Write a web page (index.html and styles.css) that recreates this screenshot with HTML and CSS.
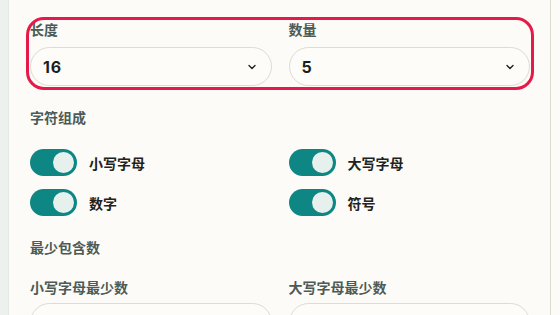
FILE: index.html
```html
<!DOCTYPE html>
<html lang="zh">
<head>
	<meta charset="utf-8">
	<title>密码生成器</title>
	<link rel="stylesheet" href="styles.css">
</head>
<body>
	<div class="page">
		<div class="rail"></div>
		<div class="panel">
			<div class="grid highlight">
				<div class="field">
					<label class="label">长度</label>
					<div class="select">
						<span>16</span>
						<svg class="chev" width="10" height="10" viewBox="0 0 10 10"><path d="M2 3.5 L5 6.5 L8 3.5" fill="none" stroke="#222" stroke-width="1.4" stroke-linecap="round" stroke-linejoin="round"/></svg>
					</div>
				</div>
				<div class="field">
					<label class="label">数量</label>
					<div class="select">
						<span>5</span>
						<svg class="chev" width="10" height="10" viewBox="0 0 10 10"><path d="M2 3.5 L5 6.5 L8 3.5" fill="none" stroke="#222" stroke-width="1.4" stroke-linecap="round" stroke-linejoin="round"/></svg>
					</div>
				</div>
			</div>

			<h3 class="label section">字符组成</h3>
			<div class="grid toggles">
				<div class="opt"><span class="switch on"></span>小写字母</div>
				<div class="opt"><span class="switch on"></span>大写字母</div>
				<div class="opt"><span class="switch on"></span>数字</div>
				<div class="opt"><span class="switch on"></span>符号</div>
			</div>

			<h3 class="label section">最少包含数</h3>
			<div class="grid mins">
				<div class="field">
					<label class="label">小写字母最少数</label>
					<div class="select"></div>
				</div>
				<div class="field">
					<label class="label">大写字母最少数</label>
					<div class="select"></div>
				</div>
			</div>
		</div>
		<div class="gutter"></div>
	</div>
</body>
</html>
```

FILE: styles.css
```css
* {
  box-sizing: border-box;
  margin: 0;
  padding: 0;
}

body {
  font-family: Inter, "Noto Sans CJK SC", sans-serif;
  background: #fcfbf7;
  overflow: hidden;
}

.page {
  display: flex;
  height: 315px;
}

.rail {
  width: 9px;
  background: #edf1ee;
  border-right: 1px solid #e4e8e4;
}

.panel {
  flex: 1;
  padding: 21px 20px 0 21px;
  border-right: 1px solid #dcd9ce;
  background: #fcfbf7;
}

.gutter {
  width: 9px;
}

.grid {
  display: grid;
  grid-template-columns: 1fr 1fr;
  column-gap: 17px;
}

.highlight {
  outline: 3px solid #e51a4b;
  outline-offset: 1px;
  border-radius: 14px;
}

.label {
  display: block;
  font-size: 14px;
  line-height: 18px;
  font-weight: 700;
  color: #4d5a55;
}

.field .label {
  margin-bottom: 8px;
}

.select {
  height: 39px;
  border: 1px solid #dedbd1;
  border-radius: 20px;
  background: #fdfcf9;
  display: flex;
  align-items: center;
  justify-content: space-between;
  padding: 0 14px 0 12px;
  font-size: 16px;
  letter-spacing: 0.8px;
  font-weight: 700;
  color: #1b1e1d;
}

.chev {
  display: block;
}

.section {
  margin-top: 23px;
}

.toggles {
  margin-top: 22px;
  row-gap: 13px;
}

.opt {
  display: flex;
  align-items: center;
  gap: 12px;
  font-size: 14px;
  font-weight: 700;
  color: #1e2220;
}

.switch {
  width: 47px;
  height: 27px;
  border-radius: 14px;
  background: #c9cfcc;
  position: relative;
  flex: none;
}

.switch.on {
  background: #0e8784;
}

.switch::after {
  content: '';
  position: absolute;
  top: 3px;
  left: 3px;
  width: 21px;
  height: 21px;
  border-radius: 50%;
  background: #e6f1ee;
}

.switch.on::after {
  left: 23px;
}

.mins {
  margin-top: 22px;
}

.mins .label {
  margin-bottom: 6px;
}
```
